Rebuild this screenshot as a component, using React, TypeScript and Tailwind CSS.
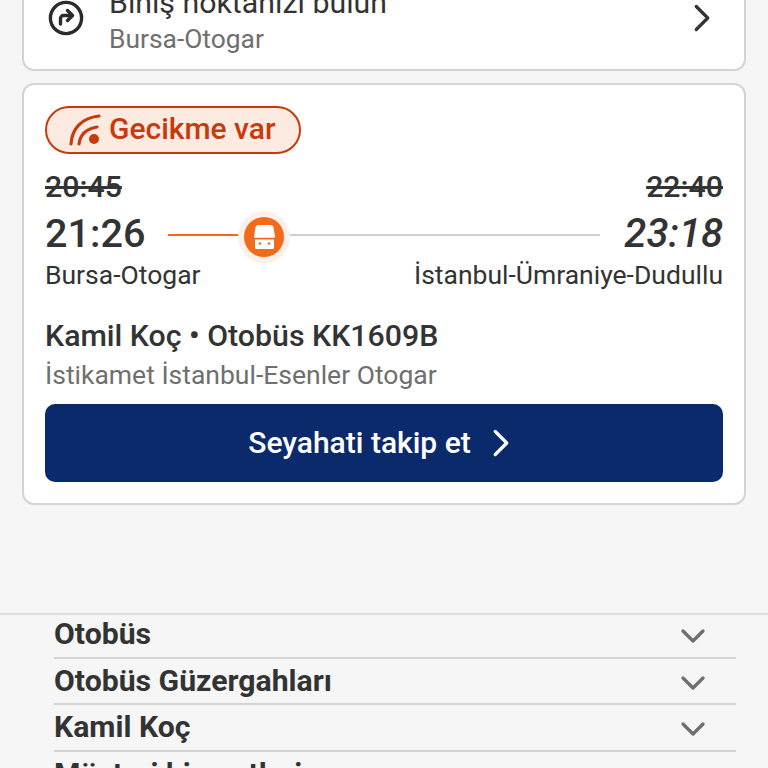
import { ChevronDown, ChevronRight } from "lucide-react";

const footerItems = ["Otobüs", "Otobüs Güzergahları", "Kamil Koç", "Müşteri hizmetleri"];

function RouteIcon() {
  return (
    <svg viewBox="0 0 36 36" className="h-9 w-9 shrink-0 text-[#2b2b2b]" fill="none" stroke="currentColor" strokeWidth="3.4" strokeLinecap="round" strokeLinejoin="round">
      <circle cx="18" cy="18" r="15.6" />
      <path d="M12.5 24v-5.500a3 3 0 0 1 3-3H24" />
      <path d="M19.5 10.500l5 5-5 5" />
    </svg>
  );
}

function DelayIcon() {
  return (
    <svg viewBox="0 0 32 32" className="h-8 w-8 shrink-0" fill="none" stroke="#c8390b" strokeWidth="3.2" strokeLinecap="round">
      <path d="M2 30C3 15 12 4 30 2" />
      <path d="M10 30c1-8 6-15 18-17" />
      <circle cx="25" cy="25" r="5" fill="#c8390b" stroke="none" />
    </svg>
  );
}

function BusMarker() {
  return (
    <div className="mt-[6px] flex h-[52px] w-[52px] shrink-0 items-center justify-center rounded-full bg-[#fdf0e9]">
      <div className="flex h-[40px] w-[40px] items-center justify-center rounded-full bg-[#f26a1b]">
        <svg viewBox="0 0 21 24" className="h-[24px] w-[21px]">
          <path d="M4 0h13a2.500 2.500 0 0 1 2.400 2l1.600 9.500a1 1 0 0 1-1 1.200H1a1 1 0 0 1-1-1.200L1.600 2A2.500 2.500 0 0 1 4 0z" fill="#fff" />
          <path d="M1 14.500h19V22.500a1.500 1.500 0 0 1-1.500 1.500h-16A1.500 1.500 0 0 1 1 22.500z" fill="#fff" />
          <circle cx="6" cy="18.500" r="1.300" fill="#f26a1b" />
          <circle cx="15" cy="18.500" r="1.300" fill="#f26a1b" />
        </svg>
      </div>
    </div>
  );
}

export default function App() {
  return (
    <div className="h-[768px] w-[768px] overflow-hidden bg-[#f6f6f6] font-['Roboto',sans-serif] text-[#333]">
      <div className="px-[22px]">
        {/* Boarding point */}
        <div className="-mt-[40px] flex h-[111px] items-start rounded-b-[12px] border-2 border-t-0 border-[#d4d4d4] bg-white pl-[24px] pr-[19px]">
          <div className="mt-[40px]">
            <RouteIcon />
          </div>
          <div className="ml-[25px] flex-1 pt-[25px]">
            <div className="text-[30.3px] leading-[36px] text-[#333]">Biniş noktanızı bulun</div>
            <div className="text-[26.4px] leading-[36px] text-[#6f6f6f]">Bursa-Otogar</div>
          </div>
          <ChevronRight className="mt-[35px] h-[46px] w-[46px] text-[#333]" strokeWidth={1.7} />
        </div>

        {/* Trip */}
        <div className="mt-[12px] h-[422px] rounded-[12px] border-2 border-[#d4d4d4] bg-white px-[21px] pt-[21px]">
          <div className="flex h-[48px] w-[256px] items-center rounded-full border-2 border-[#c8390b] bg-[#fdeae1] pl-[22px] text-[#c8390b]">
            <DelayIcon />
            <span className="ml-[8px] pb-[3px] text-[30px] font-medium leading-none">Gecikme var</span>
          </div>

          <div className="mt-[15px] flex justify-between text-[30.3px] font-medium leading-[36px] text-[#333] line-through">
            <span>20:45</span>
            <span>22:40</span>
          </div>

          <div className="mt-[3px] flex h-[52px] items-center">
            <span className="w-[123px] text-[39.6px] font-medium leading-none">21:26</span>
            <div className="mt-[2px] h-[2px] w-[70px] bg-[#f26a1b]" />
            <BusMarker />
            <div className="mt-[2px] h-[2px] w-[310px] bg-[#cfcfcf]" />
            <span className="ml-auto text-[40px] font-medium italic leading-none">23:18</span>
          </div>

          <div className="flex justify-between text-[26.5px] leading-[30px] text-[#333]">
            <span>Bursa-Otogar</span>
            <span>İstanbul-Ümraniye-Dudullu</span>
          </div>

          <div className="mt-[28px] text-[30.3px] font-medium leading-[36px]">Kamil Koç • Otobüs KK1609B</div>
          <div className="mt-[5px] text-[26.5px] leading-[32px] text-[#6f6f6f]">İstikamet İstanbul-Esenler Otogar</div>

          <div className="mt-[13px] flex h-[78px] items-center justify-center rounded-[10px] bg-[#0b2a6b] pl-[4px] text-white">
            <span className="-mt-[1px] text-[30px] font-medium">Seyahati takip et</span>
            <ChevronRight className="ml-[7px] h-[46px] w-[46px]" strokeWidth={1.7} />
          </div>
        </div>
      </div>

      {/* Footer links */}
      <div className="mt-[108px] border-t-2 border-[#dedede] pl-[54px] pr-[32px]">
        <div className="-mt-[3px]">
          {footerItems.map((item) => (
            <div key={item} className="flex h-[46.5px] items-center justify-between border-b-2 border-[#d4d4d4]">
              <span className="text-[30.2px] font-bold leading-none text-[#333]">{item}</span>
              <ChevronDown className="mr-[23px] mt-[4px] h-[40px] w-[40px] text-[#6f6f6f]" strokeWidth={2} />
            </div>
          ))}
        </div>
      </div>
    </div>
  );
}
